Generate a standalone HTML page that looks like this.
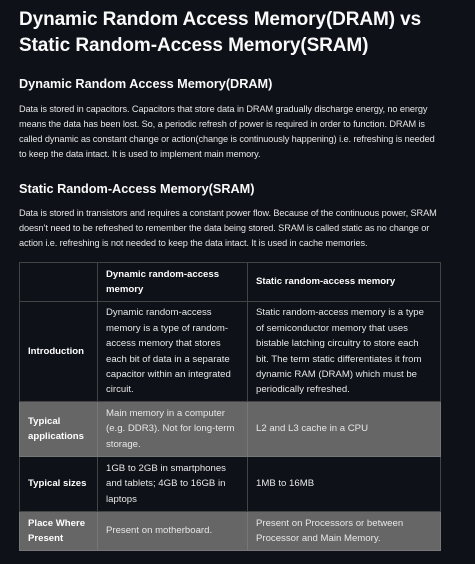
<!DOCTYPE html>
<html><head><meta charset="utf-8"><style>
html,body{margin:0;padding:0;background:#0e1117;width:475px;height:564px;overflow:hidden}
body{font-family:"Liberation Sans",sans-serif;color:#fafafa;position:relative}
.a{position:absolute;left:19px;margin:0}
h1{font-size:19px;line-height:26px;font-weight:700;letter-spacing:-0.1px;white-space:nowrap}
h2{font-size:12.7px;font-weight:700;line-height:18px}
p{font-size:9.2px;line-height:15px;color:#e6e6e6;white-space:nowrap;letter-spacing:-0.1px}
table{position:absolute;left:19px;top:262px;border-collapse:collapse;width:422px;font-size:9.6px;color:#e8e8e8}
td{border:1px solid #444;padding:0 8px;line-height:15.4px;vertical-align:middle}
.g td{background:#666;border-color:#777}
td b{color:#fff}
</style></head><body>
<h1 class="a" style="top:7px">Dynamic Random Access Memory(DRAM) vs<br>Static Random-Access Memory(SRAM)</h1>
<h2 class="a" style="top:75px">Dynamic Random Access Memory(DRAM)</h2>
<p class="a" style="top:102px">Data is stored in capacitors. Capacitors that store data in DRAM gradually discharge energy, no energy<br>means the data has been lost. So, a periodic refresh of power is required in order to function. DRAM is<br>called dynamic as constant change or action(change is continuously happening) i.e. refreshing is needed<br>to keep the data intact. It is used to implement main memory.</p>
<h2 class="a" style="top:180px">Static Random-Access Memory(SRAM)</h2>
<p class="a" style="top:206px">Data is stored in transistors and requires a constant power flow. Because of the continuous power, SRAM<br>doesn’t need to be refreshed to remember the data being stored. SRAM is called static as no change or<br>action i.e. refreshing is not needed to keep the data intact. It is used in cache memories.</p>
<table>
<tr style="height:39px"><td style="width:61px"></td><td style="width:133px"><b>Dynamic random-access memory</b></td><td><b>Static random-access memory</b></td></tr>
<tr style="height:100px"><td><b>Introduction</b></td><td>Dynamic random-access memory is a type of random-access memory that stores each bit of data in a separate capacitor within an integrated circuit.</td><td>Static random-access memory is a type of semiconductor memory that uses bistable latching circuitry to store each bit. The term static differentiates it from dynamic RAM (DRAM) which must be periodically refreshed.</td></tr>
<tr class="g" style="height:55px"><td><b>Typical applications</b></td><td>Main memory in a computer (e.g. DDR3). Not for long-term storage.</td><td>L2 and L3 cache in a CPU</td></tr>
<tr style="height:55px"><td><b>Typical sizes</b></td><td>1GB to 2GB in smartphones and tablets; 4GB to 16GB in laptops</td><td>1MB to 16MB</td></tr>
<tr class="g" style="height:39px"><td><b>Place Where Present</b></td><td>Present on motherboard.</td><td>Present on Processors or between Processor and Main Memory.</td></tr>
</table>
</body></html>
